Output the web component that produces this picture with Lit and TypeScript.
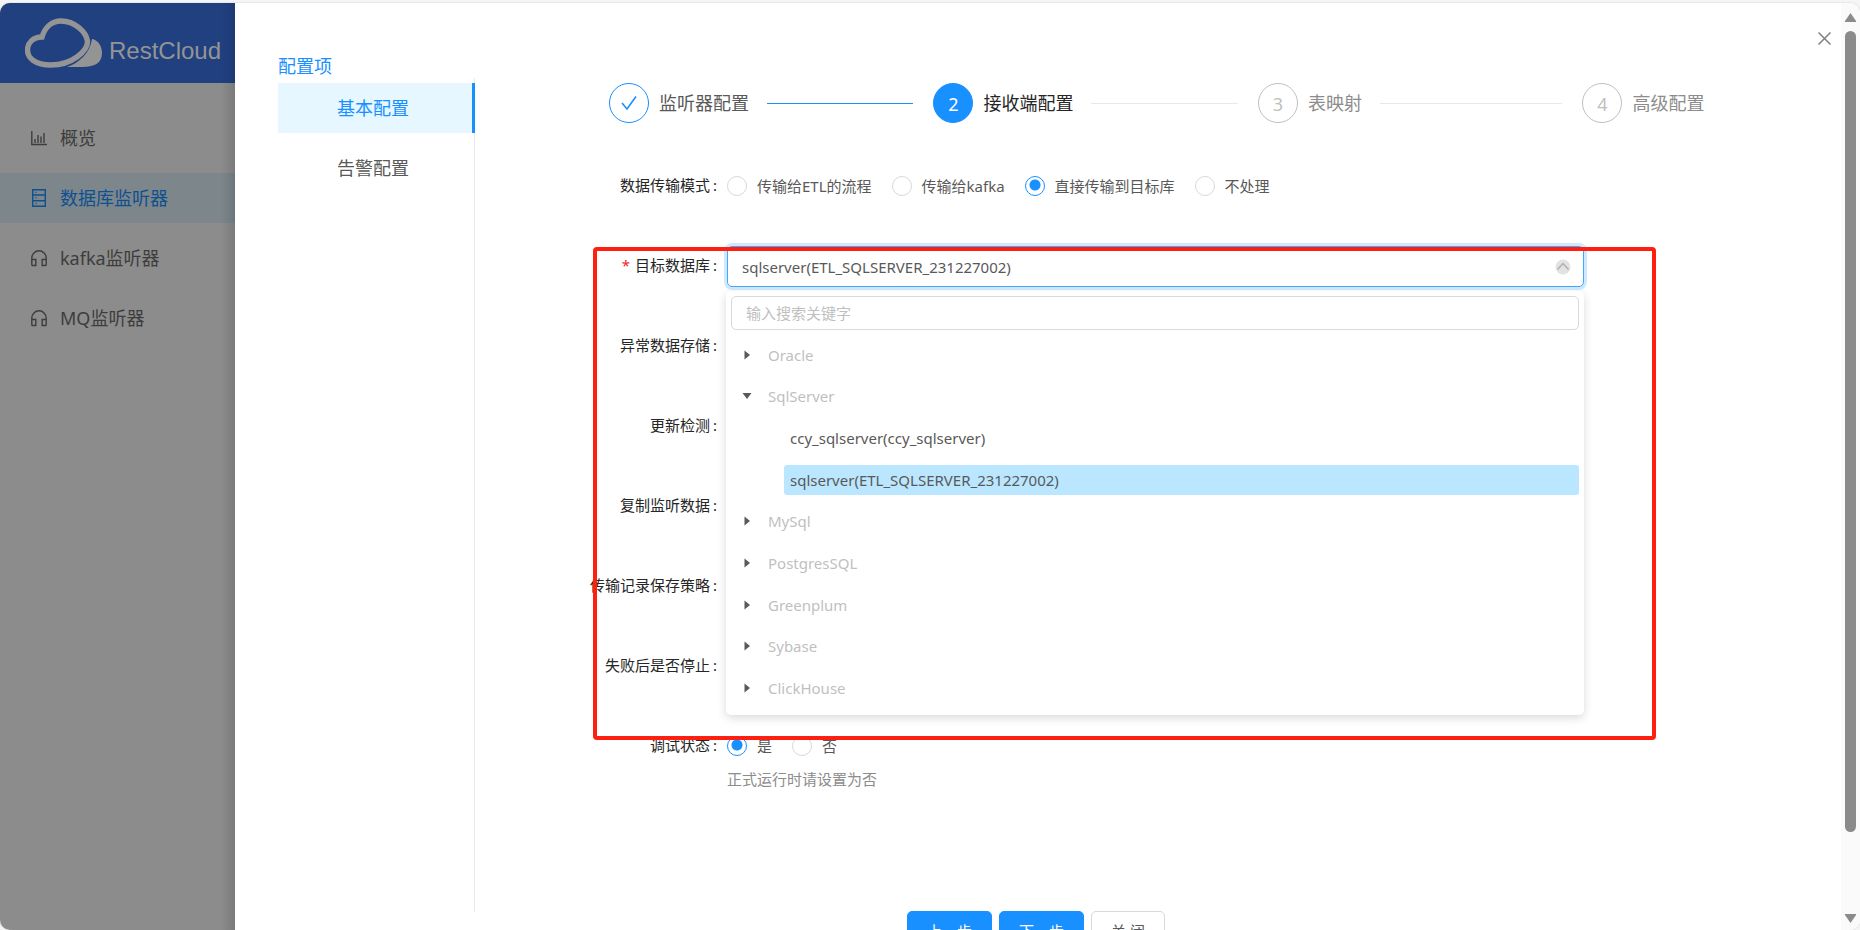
import { LitElement, html, svg, css } from "lit";
import { customElement, state } from "lit/decorators.js";

interface MenuEntry { label: string; icon: "chart" | "table" | "phones"; active?: boolean }
interface TreeEntry { label: string; kind: "closed" | "open" | "leaf"; selected?: boolean }

const MENU: MenuEntry[] = [
  { label: "概览", icon: "chart" },
  { label: "数据库监听器", icon: "table", active: true },
  { label: "kafka监听器", icon: "phones" },
  { label: "MQ监听器", icon: "phones" },
];
const STEPS = [
  { title: "监听器配置", status: "done" },
  { title: "接收端配置", status: "current" },
  { title: "表映射", status: "wait" },
  { title: "高级配置", status: "wait" },
];
const MODES = ["传输给ETL的流程", "传输给kafka", "直接传输到目标库", "不处理"];
const TREE: TreeEntry[] = [
  { label: "Oracle", kind: "closed" },
  { label: "SqlServer", kind: "open" },
  { label: "ccy_sqlserver(ccy_sqlserver)", kind: "leaf" },
  { label: "sqlserver(ETL_SQLSERVER_231227002)", kind: "leaf", selected: true },
  { label: "MySql", kind: "closed" },
  { label: "PostgresSQL", kind: "closed" },
  { label: "Greenplum", kind: "closed" },
  { label: "Sybase", kind: "closed" },
  { label: "ClickHouse", kind: "closed" },
];
const COVERED = ["异常数据存储", "更新检测", "复制监听数据", "传输记录保存策略", "失败后是否停止"];

const ICONS = {
  chart: svg`<path d="M.8 2v13.500H16M4 14v-4M7 14V6M10 14V7.500M13 14V4" />`,
  table: svg`<path d="M1.700 .7h12.600v16.600H1.700zM1.700 6h12.600M1.700 11.700h12.600M4.500 3.400h1M4.500 8.800h1M4.500 14.500h1" />`,
  phones: svg`<path d="M.8 16.500V9a7.200 7.200 0 0 1 14.400 0v7.500M.8 10.500h4v6h-4M15.200 10.500h-4v6h4" />`,
};

@customElement("app-root")
export class AppRoot extends LitElement {
  @state() private mode = 2;
  @state() private debug = true;

  static styles = css`
    :host {
      display: block;
      height: 100vh;
      overflow: hidden;
      background: #f5f5f5;
      font-family: "Noto Sans", "Noto Sans CJK SC", sans-serif;
      font-size: 15px;
      line-height: 24px;
      color: #595959;
    }
    * { box-sizing: border-box; }
    button, input { font: inherit; }
    .window {
      display: grid;
      grid-template-columns: 235px minmax(0, 1fr) 19px;
      grid-template-rows: 100%;
      height: calc(100vh - 3px);
      margin-top: 3px;
      border-radius: 10px;
      overflow: hidden;
      background: #fff;
      box-shadow: 0 0 0 1px #e8e8e8;
    }
    .side { background: linear-gradient(to left, #7a7a7a, #8c8c8c 14px); font-size: 18px; color: #3d3d3d; }
    .brand {
      display: flex; align-items: center; gap: 7px;
      height: 80px; padding-left: 25px;
      background: linear-gradient(to left, #1e3a75, #214080 14px);
      color: #949494;
    }
    .brand svg { width: 77px; height: 51px; flex: none; }
    .brand span { font: 24px/30px "Liberation Sans", sans-serif; padding-top: 15px; }
    .side nav { display: grid; gap: 10px; padding-top: 30px; }
    .side a {
      display: flex; align-items: center; gap: 13px;
      height: 50px; padding-left: 31px;
      color: inherit; text-decoration: none;
    }
    .side a.active { background: linear-gradient(to left, #6d767b, #7c868b 14px); color: #0e5090; }
    .side nav svg { width: 16px; height: 18px; fill: none; stroke: currentColor; stroke-width: 1.4; }

    .drawer { display: grid; grid-template-columns: 240px minmax(0, 1fr); grid-template-rows: 100%; position: relative; }
    .close {
      position: absolute; right: 8px; top: 27px;
      width: 17px; height: 17px; padding: 2px; border: 0; background: none; color: #7f7f7f;
    }
    .close svg, .clear svg { display: block; width: 100%; height: 100%; }
    .config { padding: 51px 0 18px 43px; display: flex; flex-direction: column; font-size: 18px; }
    .config h2 { margin: 0; font-size: 18px; font-weight: 400; line-height: 24px; color: #1890ff; }
    .config nav { flex: 1; border-right: 1px solid #e8e8e8; padding-top: 5px; display: flex; flex-direction: column; gap: 10px; }
    .config a {
      height: 50px; line-height: 50px; padding-right: 4px; margin-right: -1px;
      text-align: center; color: #595959; text-decoration: none; border-right: 3px solid transparent;
    }
    .config a.active { color: #1890ff; background: #e6f7ff; border-color: #1890ff; }

    .main { padding: 80px 10% 0 134px; }
    .steps { display: flex; list-style: none; margin: 0; padding: 0; font-size: 18px; line-height: 40px; }
    .step { display: flex; align-items: center; gap: 10px; color: #8c8c8c; }
    .step:not(:last-child) { flex: 1; padding-right: 20px; }
    .step:not(:last-child)::after { content: ""; flex: 1; height: 1px; margin-left: 8px; background: #e8e8e8; }
    .ball {
      display: grid; place-items: center; width: 40px; height: 40px;
      border: 1px solid #bfbfbf; border-radius: 50%; color: #bfbfbf;
    }
    .step.done { color: #595959; }
    .step.done::after { background: #1890ff !important; }
    .step.done .ball { border-color: #1890ff; color: #1890ff; }
    .step.current { color: #262626; }
    .step.current .ball { background: #1890ff; border-color: #1890ff; color: #fff; }
    .ball svg { width: 18px; height: 18px; }

    .form { margin: 43px 0 0; padding-right: 120px; display: grid; gap: 40px; }
    .row { display: grid; grid-template-columns: 109px minmax(0, 1fr); gap: 9px; height: 40px; position: relative; }
    .label { justify-self: end; white-space: nowrap; line-height: 39px; color: #262626; display: flex; }
    .label::after { content: ":"; width: 5px; margin-left: 3px; }
    .star::before { content: "*"; color: #f5222d; margin-right: 5px; }
    .field { position: relative; }
    .options { display: flex; align-items: center; gap: 20px; height: 40px; }
    .options label { display: flex; align-items: center; gap: 10px; white-space: nowrap; }
    .options input {
      appearance: none; margin: 0; width: 20px; height: 20px;
      border: 1px solid #d9d9d9; border-radius: 50%; background: #fff;
    }
    .options input:checked { border-color: #1890ff; background: radial-gradient(circle at 9px 8px, #1890ff 5px, #fff 6px); }
    .help { color: #8c8c8c; line-height: 26px; }
    .picker {
      display: flex; align-items: center; justify-content: space-between;
      width: 100%; height: 41px; padding: 0 12px 0 14px;
      border: 1px solid #40a9ff; border-radius: 5px; background: #fff;
      box-shadow: 0 0 0 3px #d1e9ff; color: #595959; text-align: left;
    }
    .clear { width: 16px; height: 16px; }
    .dropdown {
      position: absolute; z-index: 2; left: -1px; right: 0; top: 45px;
      padding: 5px 5px 6px; border-radius: 5px; background: #fff;
      box-shadow: 0 3px 10px rgba(0, 0, 0, .15);
    }
    .search {
      display: block; width: 100%; height: 34px; padding: 0 14px 1px;
      border: 1px solid #d9d9d9; border-radius: 5px; outline: 0; background: #fff; color: #595959;
    }
    .search::placeholder { color: #bfbfbf; }
    .tree { list-style: none; margin: 4px 0 0; padding: 0; height: 375px; display: grid; grid-auto-rows: 1fr; }
    .node { display: flex; align-items: center; color: #bfbfbf; }
    .node svg { width: 10px; height: 10px; margin: 0 16px 0 11px; fill: #595959; flex: none; }
    .node span { line-height: 30px; }
    .node.leaf { color: #595959; padding-left: 53px; }
    .node.leaf span { flex: 1; padding-left: 6px; border-radius: 3px; }
    .node.selected span { background: #bae7ff; }

    .actions { display: flex; gap: 7px; margin: 145px 0 0; padding-left: 298px; }
    .btn { height: 40px; padding: 0 19px; border: 1px solid #d9d9d9; border-radius: 5px; background: #fff; color: #595959; white-space: nowrap; }
    .btn.primary { background: #1890ff; border-color: #1890ff; color: #fff; }

    .frame {
      position: absolute; z-index: 3; left: 358px; right: 185px; top: 244px; height: 493px;
      border: 4px solid #ff1f11; border-radius: 4px; pointer-events: none;
    }
    .rail { background: #fafafa; display: flex; flex-direction: column; align-items: center; padding: 10px 0 7px; }
    .rail svg { width: 11px; height: 9px; fill: #8a8a8a; flex: none; }
    .thumb { width: 11px; flex: 0 0 88%; margin: 9px 0 auto; border-radius: 6px; background: #8a8a8a; }
  `;

  private caret(kind: string) {
    return kind === "open"
      ? html`<svg viewBox="0 0 10 10"><path d="M.5 2h9L5 8z" /></svg>`
      : html`<svg viewBox="0 0 10 10"><path d="M2.500 .5L8 5l-5.500 4.500z" /></svg>`;
  }

  render() {
    return html`
      <div class="window">
        <aside class="side">
          <div class="brand">
            <svg viewBox="0 0 77 51" fill="none">
              <path d="M42 49c12-4 23-14 25-28 6 1 10 7 10 14 0 9-6 14-20 14z" fill="#949494" />
              <path d="M17 19C20 9 27 3 36 3c14 0 25 11 26.500 20C63 33 47 47 26 47 10 47 2.500 40 2.500 32 2.500 25 8 19 17 19z" stroke="#949494" stroke-width="5.400" />
            </svg>
            <span>RestCloud</span>
          </div>
          <nav>
            ${MENU.map((m) => html`<a href="#" class=${m.active ? "active" : ""}><svg viewBox="0 0 16 18">${ICONS[m.icon]}</svg>${m.label}</a>`)}
          </nav>
        </aside>
        <section class="drawer">
          <div class="config">
            <h2>配置项</h2>
            <nav><a href="#" class="active">基本配置</a><a href="#">告警配置</a></nav>
          </div>
          <div class="main">
            <ol class="steps">
              ${STEPS.map((s, i) => html`
                <li class="step ${s.status}">
                  <span class="ball">${s.status === "done"
                    ? html`<svg viewBox="0 0 18 18" fill="none" stroke="currentColor" stroke-width="1.6"><path d="M2 9l5 6L16 2.500" /></svg>`
                    : i + 1}</span>${s.title}
                </li>`)}
            </ol>
            <form class="form" @submit=${(e: Event) => e.preventDefault()}>
              <div class="row">
                <span class="label" id="mode">数据传输模式</span>
                <div class="options" role="radiogroup" aria-labelledby="mode">
                  ${MODES.map((m, i) => html`<label><input type="radio" name="mode" .checked=${this.mode === i} @change=${() => (this.mode = i)} />${m}</label>`)}
                </div>
              </div>
              <div class="row">
                <label class="label star" for="target">目标数据库</label>
                <div class="field">
                  <button class="picker" id="target" type="button">
                    sqlserver(ETL_SQLSERVER_231227002)
                    <span class="clear"><svg viewBox="0 0 16 16"><circle cx="8" cy="8" r="7.500" fill="#e2e2e2" /><path d="M2.500 10.500L8 4.500l5.500 6" fill="none" stroke="#b0b0b0" stroke-width="1.500" /></svg></span>
                  </button>
                  <div class="dropdown">
                    <input class="search" placeholder="输入搜索关键字" aria-label="输入搜索关键字" />
                    <ul class="tree">
                      ${TREE.map((t) => html`<li class="node ${t.kind} ${t.selected ? "selected" : ""}">${t.kind === "leaf" ? "" : this.caret(t.kind)}<span>${t.label}</span></li>`)}
                    </ul>
                  </div>
                </div>
              </div>
              ${COVERED.map((c) => html`<div class="row"><span class="label">${c}</span></div>`)}
              <div class="row">
                <span class="label" id="debug">调试状态</span>
                <div>
                  <div class="options" role="radiogroup" aria-labelledby="debug">
                    <label><input type="radio" name="debug" .checked=${this.debug} @change=${() => (this.debug = true)} />是</label>
                    <label><input type="radio" name="debug" .checked=${!this.debug} @change=${() => (this.debug = false)} />否</label>
                  </div>
                  <div class="help">正式运行时请设置为否</div>
                </div>
              </div>
            </form>
            <div class="actions">
              <button class="btn primary" type="button">上一步</button>
              <button class="btn primary" type="button">下一步</button>
              <button class="btn" type="button">关 闭</button>
            </div>
          </div>
          <button class="close" type="button" aria-label="关闭"><svg viewBox="0 0 13 13" fill="none" stroke="currentColor" stroke-width="1.500"><path d="M.5 .5l12 12M12.500 .5l-12 12" /></svg></button>
          <div class="frame"></div>
        </section>
        <div class="rail">
          <svg viewBox="0 0 11 9"><path d="M5.500 0L11 8v1H0V8z" /></svg>
          <div class="thumb"></div>
          <svg viewBox="0 0 11 9"><path d="M5.500 9L11 1V0H0v1z" /></svg>
        </div>
      </div>
    `;
  }
}
